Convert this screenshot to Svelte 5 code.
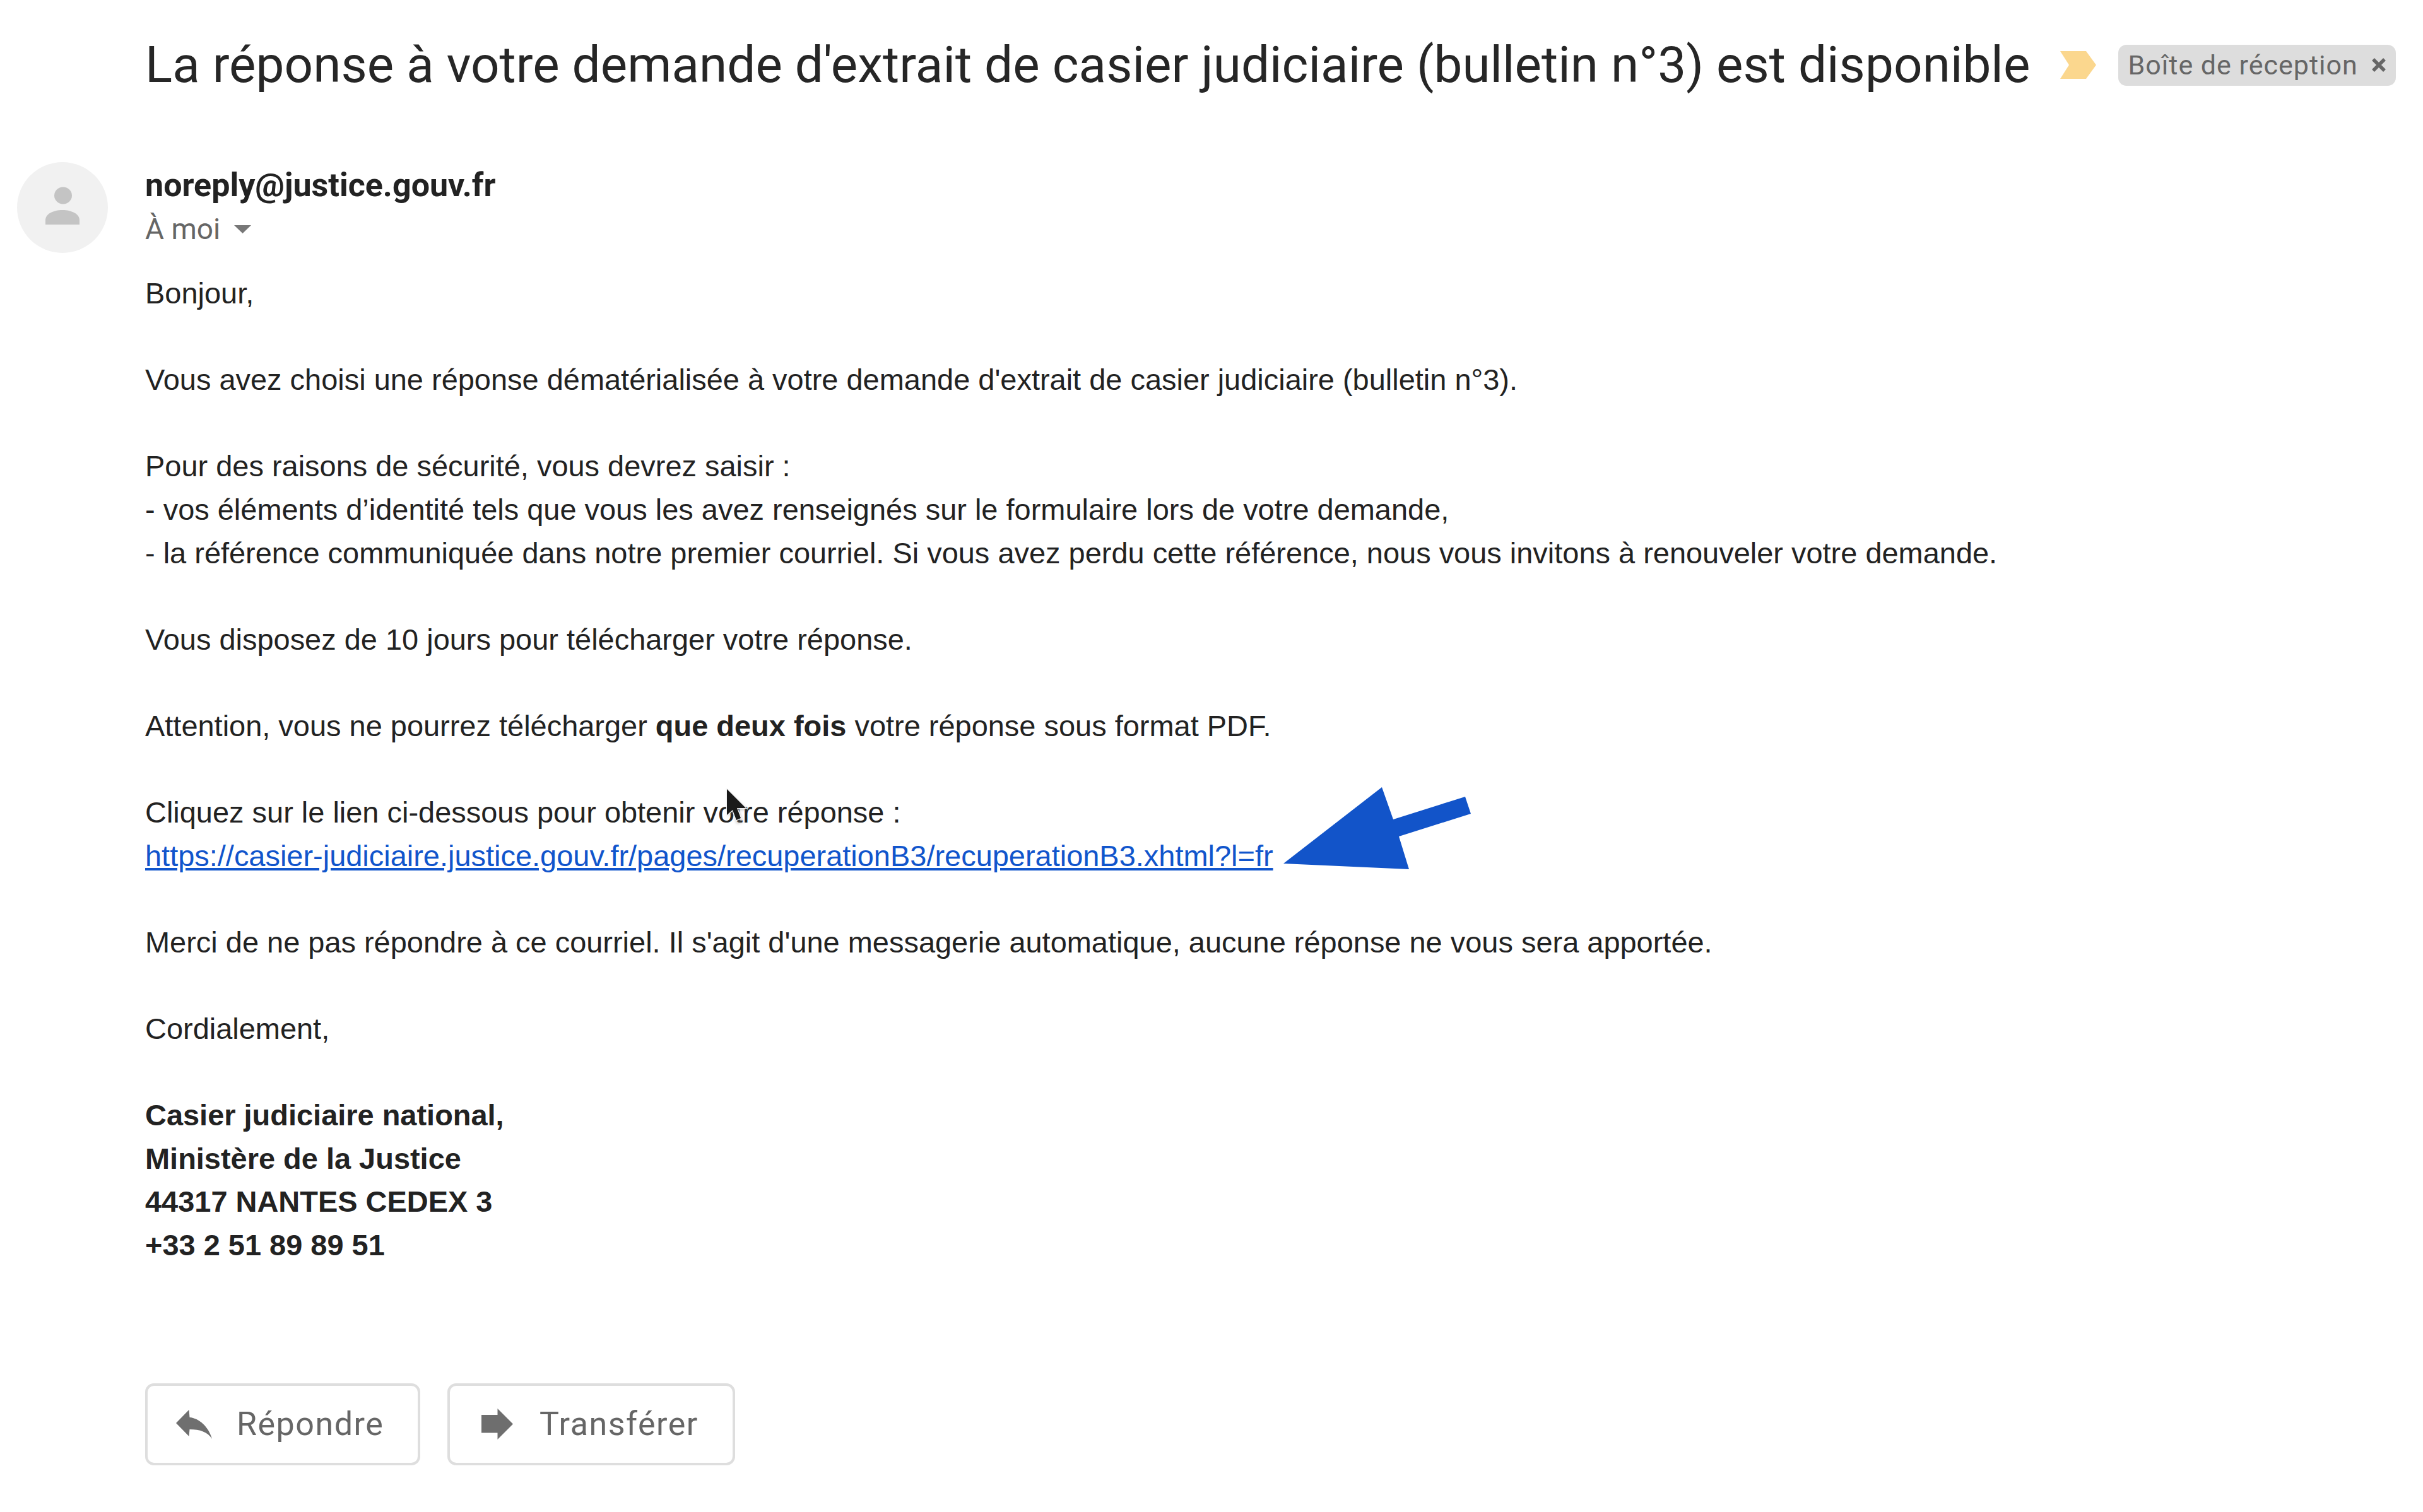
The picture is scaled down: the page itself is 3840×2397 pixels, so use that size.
<script>
  const lines = [
    ["Vous avez choisi une réponse dématérialisée à votre demande d'extrait de casier judiciaire (bulletin n°3)."],
    ["Pour des raisons de sécurité, vous devrez saisir :",
     "- vos éléments d’identité tels que vous les avez renseignés sur le formulaire lors de votre demande,",
     "- la référence communiquée dans notre premier courriel. Si vous avez perdu cette référence, nous vous invitons à renouveler votre demande."],
    ["Vous disposez de 10 jours pour télécharger votre réponse."]
  ];
</script>

<div class="page">
  <header class="subject">
    <h1>La réponse à votre demande d'extrait de casier judiciaire (bulletin n°3) est disponible</h1>
    <svg class="chevron" viewBox="0 0 57 44" width="57" height="44"><path d="M0 0H41L57 22 41 44H0L14 22Z" fill="#fbd78e"/></svg>
    <span class="badge">Boîte de réception
      <svg viewBox="0 0 24 24" width="24" height="24"><path d="M3 3L21 21M21 3L3 21" stroke="#666" stroke-width="5.5" fill="none"/></svg>
    </span>
  </header>

  <section class="message">
    <div class="avatar">
      <svg viewBox="0 0 144 144" width="144" height="144">
        <ellipse cx="73" cy="53" rx="14" ry="13.5" fill="#c4c4c4"/>
        <path d="M45 99V92C45 82 58 76 72 76S99 82 99 92V99Z" fill="#c4c4c4"/>
      </svg>
    </div>
    <div class="content">
      <div class="sender">noreply@justice.gouv.fr</div>
      <div class="to">À moi <svg viewBox="0 0 27 13" width="27" height="13"><path d="M0 0H27L13.5 13Z" fill="#777"/></svg></div>

      <div class="body">
        <p>Bonjour,</p>
        {#each lines as group}
          <p>{#each group as l}{l}<br/>{/each}</p>
        {/each}
        <p>Attention, vous ne pourrez télécharger <b>que deux fois</b> votre réponse sous format PDF.</p>
        <p>Cliquez sur le lien ci-dessous pour obtenir votre réponse :<br/>
          <a href="#top">https://casier-judiciaire.justice.gouv.fr/pages/recuperationB3/recuperationB3.xhtml?l=fr</a></p>
        <p>Merci de ne pas répondre à ce courriel. Il s'agit d'une messagerie automatique, aucune réponse ne vous sera apportée.</p>
        <p>Cordialement,</p>
        <p><b>Casier judiciaire national,<br/>Ministère de la Justice<br/>44317 NANTES CEDEX 3<br/>+33 2 51 89 89 51</b></p>
      </div>

      <div class="actions">
        <button class="reply">
          <svg viewBox="0 0 57 46" width="57" height="46"><path d="M0 21L20.500 0L21.500 12C36 13 52 27 57 46C50 35 38 31 21.500 31L20.500 42Z" fill="#6f6f6f"/></svg>
          Répondre
        </button>
        <button class="forward">
          <svg viewBox="0 0 50 49" width="50" height="49"><path d="M0 10H25.500V0L50 24.500L25.500 49V38.500H0Z" fill="#6e6e6e"/></svg>
          Transférer
        </button>
      </div>
    </div>
  </section>

  <svg class="arrow" viewBox="0 0 300 135" width="300" height="135">
    <path d="M3 121L159 0L177 51L291 15L300 42L186 78L202 130Z" fill="#1254c9"/>
  </svg>
  <svg class="cursor" viewBox="0 0 44 66" width="44" height="66">
    <path class="shade" d="M3 4V44L12 37L18 56L27 53L21 34H35Z" fill="#777" opacity=".4"/>
    <path d="M2 1V42L11 34L17 50L24 47L18 31H32Z" fill="#1a1a1a" stroke="#f4f4f4" stroke-width="2.500" paint-order="stroke"/>
  </svg>
</div>

<style>
  :global(body) { margin: 0; background: #fff; }
  .page { position: relative; width: 3840px; height: 2397px; overflow: hidden; color: #222; background: #fff; }
  .subject { display: flex; align-items: center; height: 102px; padding: 52px 0 0 230px; }
  h1 { margin: 0; font: 400 80px/102px Roboto, "Liberation Sans", sans-serif; letter-spacing: .06px; color: #262626; white-space: nowrap; }
  .chevron { margin-left: 48px; }
  .badge { display: flex; align-items: center; gap: 21px; margin-left: 35px; height: 65px; padding: 0 15px; background: #ddd; border-radius: 13px; font: 400 43px/65px Roboto, "Liberation Sans", sans-serif; letter-spacing: 1px; color: #666; white-space: nowrap; box-sizing: border-box; }
  .message { display: flex; padding: 103px 0 0 27px; }
  .avatar { width: 144px; height: 144px; border-radius: 50%; background: #f1f1f1; flex: none; margin-right: 59px; }
  .avatar svg { display: block; }
  .content { padding-top: 3px; }
  .sender { font: 700 52px/68px Roboto, "Liberation Sans", sans-serif; color: #222; white-space: nowrap; }
  .to { display: flex; align-items: center; gap: 22px; font: 400 46px/71px Roboto, "Liberation Sans", sans-serif; color: #666; }
  .body { font: 400 46.95px/68.6px "Liberation Sans", Arial, sans-serif; color: #222; white-space: nowrap; margin-top: 32px; }
  .body p { margin: 0 0 68.6px; }
  .body a { color: #1155cc; }
  .actions { display: flex; gap: 43px; margin-top: 184px; }
  button { display: flex; align-items: center; height: 130px; background: #fff; border: 4px solid #dedede; border-radius: 14px; color: #666; font: 400 52px Roboto, "Liberation Sans", sans-serif; letter-spacing: 1.5px; box-sizing: border-box; }
  .reply { width: 436px; padding: 0 0 0 45px; gap: 39px; }
  .forward { width: 456px; padding: 0 0 0 50px; gap: 42px; }
  .arrow { position: absolute; left: 2031px; top: 1248px; }
  .cursor { position: absolute; left: 1150px; top: 1250px; }
  .shade { filter: blur(2px); }
</style>
